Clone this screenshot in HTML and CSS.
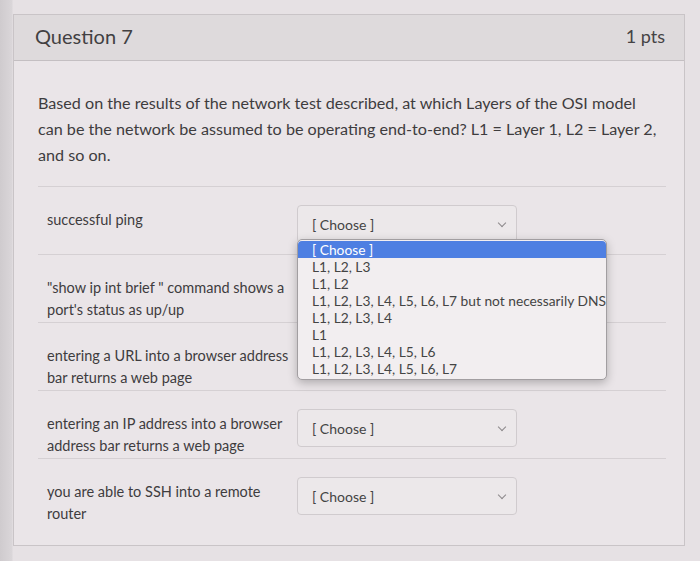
FILE: index.html
```
<!DOCTYPE html>
<html>
<head>
    <meta charset="utf-8" />
    <title>Question 7</title>
    <link rel="stylesheet" href="styles.css">
</head>
<body>
    <div class="quiz-card">
        <div class="card-head">
            <span class="q-title">Question 7</span>
            <span class="q-pts">1 pts</span>
        </div>
        <div class="card-body">
            <p class="q-text">Based on the results of the network test described, at which Layers of the OSI model can be the network be assumed to be operating end-to-end? L1 = Layer 1, L2 = Layer 2, and so on.</p>
            <div class="match-row">
                <div class="match-label">successful ping</div>
                <div class="select-wrap">
                    <div class="select-box">[ Choose ]<span class="chev"></span></div>
                    <ul class="drop-list">
                        <li class="on">[ Choose ]</li>
                        <li>L1, L2, L3</li>
                        <li>L1, L2</li>
                        <li>L1, L2, L3, L4, L5, L6, L7 but not necessarily DNS</li>
                        <li>L1, L2, L3, L4</li>
                        <li>L1</li>
                        <li>L1, L2, L3, L4, L5, L6</li>
                        <li>L1, L2, L3, L4, L5, L6, L7</li>
                    </ul>
                </div>
            </div>
            <div class="match-row">
                <div class="match-label">"show ip int brief " command shows a port's status as up/up</div>
                <div class="select-wrap">
                    <div class="select-box">[ Choose ]<span class="chev"></span></div>
                </div>
            </div>
            <div class="match-row">
                <div class="match-label">entering a URL into a browser address bar returns a web page</div>
                <div class="select-wrap">
                    <div class="select-box">[ Choose ]<span class="chev"></span></div>
                </div>
            </div>
            <div class="match-row">
                <div class="match-label">entering an IP address into a browser address bar returns a web page</div>
                <div class="select-wrap">
                    <div class="select-box">[ Choose ]<span class="chev"></span></div>
                </div>
            </div>
            <div class="match-row">
                <div class="match-label">you are able to SSH into a remote router</div>
                <div class="select-wrap">
                    <div class="select-box">[ Choose ]<span class="chev"></span></div>
                </div>
            </div>
        </div>
    </div>
</body>
</html>
```
FILE: styles.css
```
html,body,div,p,ul,li{margin:0;padding:0;}
*{box-sizing:border-box;}
body{font-family:Lato,"Liberation Sans",sans-serif;color:#3e3c3e;background:linear-gradient(90deg,#cfcbce 0px,#dad6d9 12px,#e6e1e4 13px);height:561px;overflow:hidden;}
.quiz-card{margin:14px 15px 0 13px;height:532px;border:1px solid #c9c4c7;background:#eae5e8;}
.card-head{height:46px;display:flex;align-items:center;justify-content:space-between;padding:0 19px 3px 21px;background:#dedadc;border-bottom:1px solid #c4bfc2;}
.q-title{font-size:20px;color:#424042;}
.q-pts{font-size:18px;color:#454345;}
.card-body{padding:29px 18px 0 24px;}
.q-text{font-size:16.15px;line-height:26px;width:626px;}
.match-row{height:68px;margin-top:18px;padding:18px 0 0 9px;display:flex;gap:6px;border-top:1px solid #d5d0d3;}
.match-row + .match-row{margin-top:0;}
.match-label{width:244px;padding-top:4px;font-size:14.5px;line-height:22px;}
.select-wrap{position:relative;}
.select-box{position:relative;width:220px;height:38px;padding:0 14px;display:flex;align-items:center;font-size:14px;color:#444;border:1px solid #d0cbce;border-radius:4px;background:#ece8ea;}
.chev{position:absolute;right:11px;top:14px;width:6px;height:6px;border-right:1px solid #8c888b;border-bottom:1px solid #8c888b;transform:rotate(45deg);}
.drop-list{position:absolute;left:0;top:34px;width:310px;z-index:5;list-style:none;padding:1px 0 2px;font-size:13.75px;line-height:17px;color:#444;background:#f2eef0;border:1px solid #a29ea1;border-radius:5px;box-shadow:0 3px 10px rgba(0,0,0,.25);}
.drop-list li{padding-left:14px;white-space:nowrap;}
.drop-list li.on{background:#4e7fe2;color:#fff;border-radius:4px 4px 0 0;}
```
